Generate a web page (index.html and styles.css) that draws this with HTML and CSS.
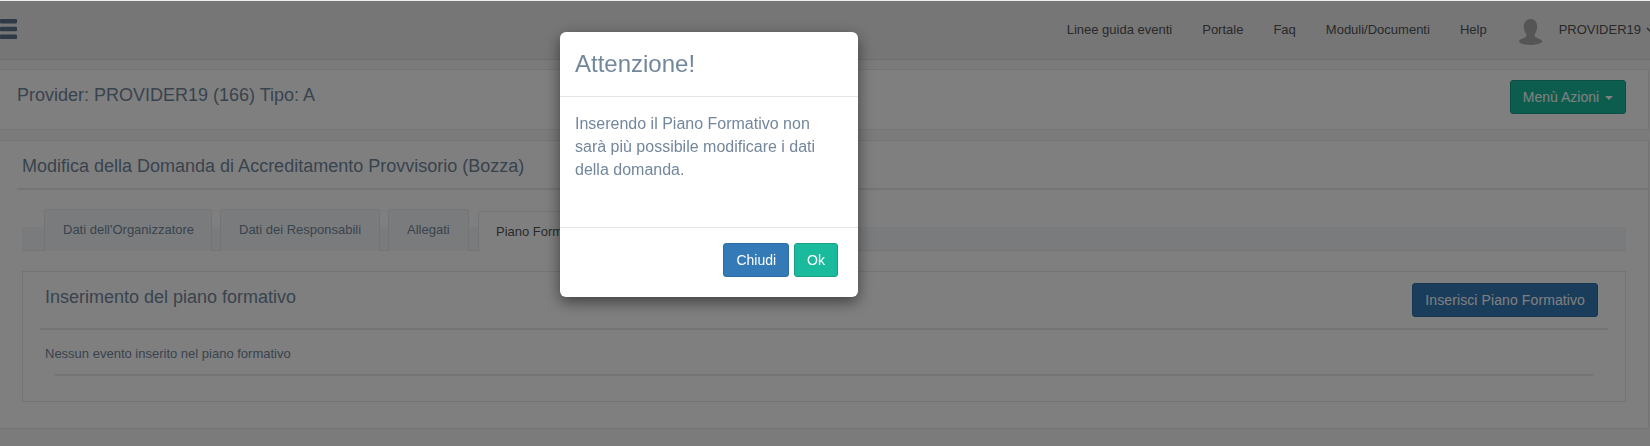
FILE: index.html
```html
<!DOCTYPE html>
<html lang="it">
<head>
<meta charset="utf-8">
<title>Piano Formativo</title>
<link rel="stylesheet" href="styles.css">
</head>
<body>
<header class="topbar">
  <svg class="burger" width="17" height="20" viewBox="0 0 17 20"><rect y="0" width="17" height="4.6" rx="1"/><rect y="7.7" width="17" height="4.6" rx="1"/><rect y="15.4" width="17" height="4.6" rx="1"/></svg>
  <nav class="topnav">
    <a>Linee guida eventi</a>
    <a>Portale</a>
    <a>Faq</a>
    <a>Moduli/Documenti</a>
    <a>Help</a>
    <span class="user">
      <svg class="avatar" width="23" height="26" viewBox="0 0 23 26"><path d="M11.500 0c4.200 0 6.700 3 6.700 7.500 0 3-1 5.600-2.200 7.200-.7 1-.5 2.600.4 3.200 1.500 1 4.500 1.700 6 3.200.6.600.8 1.600.4 2.200C21 25 16.500 26 11.500 26S2 25 .2 23.300c-.4-.6-.2-1.600.4-2.200 1.500-1.500 4.500-2.200 6-3.200.9-.6 1.100-2.200.4-3.200C5.800 13.100 4.800 10.500 4.800 7.500 4.800 3 7.300 0 11.500 0z"/></svg>
      <span>PROVIDER19</span>
      <svg class="chev" width="9" height="6" viewBox="0 0 9 6"><path d="M1 1l3.500 3.500L8 1" fill="none" stroke="currentColor" stroke-width="1.300"/></svg>
    </span>
  </nav>
</header>

<section class="panel provider">
  <div class="provider-title">Provider: PROVIDER19 (166) Tipo: A</div>
  <button class="btn btn-green">Menù Azioni <span class="caret"></span></button>
</section>

<section class="panel main">
  <h2 class="main-title">Modifica della Domanda di Accreditamento Provvisorio (Bozza)</h2>
  <ul class="tabs">
    <li class="tab">Dati dell'Organizzatore</li>
    <li class="tab">Dati dei Responsabili</li>
    <li class="tab">Allegati</li>
    <li class="tab active">Piano Formativo</li>
  </ul>
  <div class="box">
    <div class="box-head">
      <h3 class="box-title">Inserimento del piano formativo</h3>
      <button class="btn btn-blue">Inserisci Piano Formativo</button>
    </div>
    <p class="empty">Nessun evento inserito nel piano formativo</p>
  </div>
</section>

<div class="backdrop"></div>

<div class="modal">
  <div class="modal-header"><h4>Attenzione!</h4></div>
  <div class="modal-body">Inserendo il Piano Formativo non sarà più possibile modificare i dati della domanda.</div>
  <div class="modal-footer">
    <button class="mbtn mbtn-blue">Chiudi</button>
    <button class="mbtn mbtn-green">Ok</button>
  </div>
</div>
</body>
</html>
```
FILE: styles.css
```css
* { box-sizing: border-box; }
html, body { margin: 0; padding: 0; height: 100%; overflow: hidden; }
body {
  background: #f7f7f7;
  font-family: "Liberation Sans", Arial, sans-serif;
  font-size: 13px;
  color: #73879c;
}
.topbar {
  height: 60px;
  background: #ededed;
  border-bottom: 1px solid #d9dee4;
  display: flex;
  align-items: center;
  justify-content: space-between;
}
.burger { fill: #5a738e; margin-top: -1px; }
.topnav { display: flex; align-items: center; color: #515356; margin-right: -5px; }
.topnav > a { margin-right: 30px; }
.user { display: flex; align-items: center; margin-left: 2px; white-space: nowrap; }
.avatar { fill: #aaa; margin-right: 17px; margin-top: 4px; }
.chev { margin-left: 5px; flex: none; }
.panel {
  background: #fff;
  border: 1px solid #e6e9ed;
  border-left: none;
  margin-right: 1px;
}
.provider {
  margin-top: 9px;
  height: 61px;
  display: flex;
  justify-content: space-between;
  padding: 10px 22px 0 17px;
}
.provider-title { font-size: 18px; line-height: 20px; padding-top: 5px; }
.btn {
  height: 34px;
  border-radius: 3px;
  font: 14px "Liberation Sans", Arial, sans-serif;
  color: #fff;
  padding: 0 12px;
  border: 1px solid transparent;
}
.btn-green { background: #1abb9c; border-color: #169f85; }
.btn-blue { background: #337ab7; border-color: #2e6da4; letter-spacing: .1px; }
.caret {
  display: inline-block;
  border-top: 4px solid #fff;
  border-left: 4px solid transparent;
  border-right: 4px solid transparent;
  vertical-align: middle;
  margin-left: 2px;
}
.main { margin-top: 10px; height: 289px; padding: 0 22px; }
.main-title {
  margin: 0 -22px 0 -5px;
  padding: 15px 0 12px 5px;
  font-size: 18px;
  font-weight: 400;
  line-height: 21px;
  border-bottom: 2px solid #e6e9ed;
  height: 49px;
}
.tabs {
  list-style: none;
  margin: 19px 0 0;
  padding: 0 0 0 22px;
  display: flex;
  gap: 8px;
  height: 42px;
  background: linear-gradient(#fff 18px, #f5f7fa 18px);
  border-bottom: 1px solid #e6e9ed;
}
.tab {
  height: 42px;
  width: 168px;
  padding-top: 12px;
  padding-left: 18px;
  background: #f5f7fa;
  border: 1px solid #e6e9ed;
  border-bottom: none;
  border-radius: 3px 3px 0 0;
  white-space: nowrap;
}
.tab:nth-child(2) { width: 160px; }
.tab:nth-child(3) { width: 81px; }
.tab.active {
  width: 128px;
  margin-top: 2px;
  margin-left: 1px;
  padding-left: 17px;
  height: 40px;
  background: #fff;
  color: #555;
}
.box {
  margin-top: 20px;
  height: 131px;
  border: 1px solid #e6e9ed;
  padding: 0 17px;
}
.box-head {
  display: flex;
  justify-content: space-between;
  height: 58px;
  padding: 11px 10px 0 5px;
  border-bottom: 2px solid #e6e9ed;
}
.box-title { margin: 0; font-size: 18px; font-weight: 400; line-height: 28px; }
.empty {
  margin: 0 15px;
  padding: 15px 0 11px;
  line-height: 18px;
  text-indent: -10px;
  border-bottom: 2px solid #e6e9ed;
  height: 46px;
}
.backdrop {
  position: fixed;
  inset: 1px 0 0 0;
  background: rgba(0, 0, 0, .5);
}
.modal {
  position: fixed;
  left: 560px;
  top: 32px;
  width: 298px;
  height: 265px;
  background: #fff;
  border-radius: 6px;
  box-shadow: 0 5px 15px rgba(0, 0, 0, .5);
  display: flex;
  flex-direction: column;
}
.modal-header { height: 65px; border-bottom: 1px solid #e5e5e5; padding: 16px 15px 0; }
.modal-header h4 { margin: 0; font-size: 24px; font-weight: 400; line-height: 32px; }
.modal-body { flex: 1; padding: 15px; font-size: 16px; line-height: 23px; }
.modal-footer {
  height: 70px;
  border-top: 1px solid #e5e5e5;
  padding: 15px 20px 0 0;
  display: flex;
  justify-content: flex-end;
  gap: 5px;
}
.mbtn {
  height: 34px;
  border-radius: 3px;
  font: 14px "Liberation Sans", Arial, sans-serif;
  color: #fff;
  padding: 0 12px;
  border: 1px solid transparent;
}
.mbtn-blue { background: #337ab7; border-color: #2e6da4; }
.mbtn-green { background: #1abb9c; border-color: #169f85; }
```
